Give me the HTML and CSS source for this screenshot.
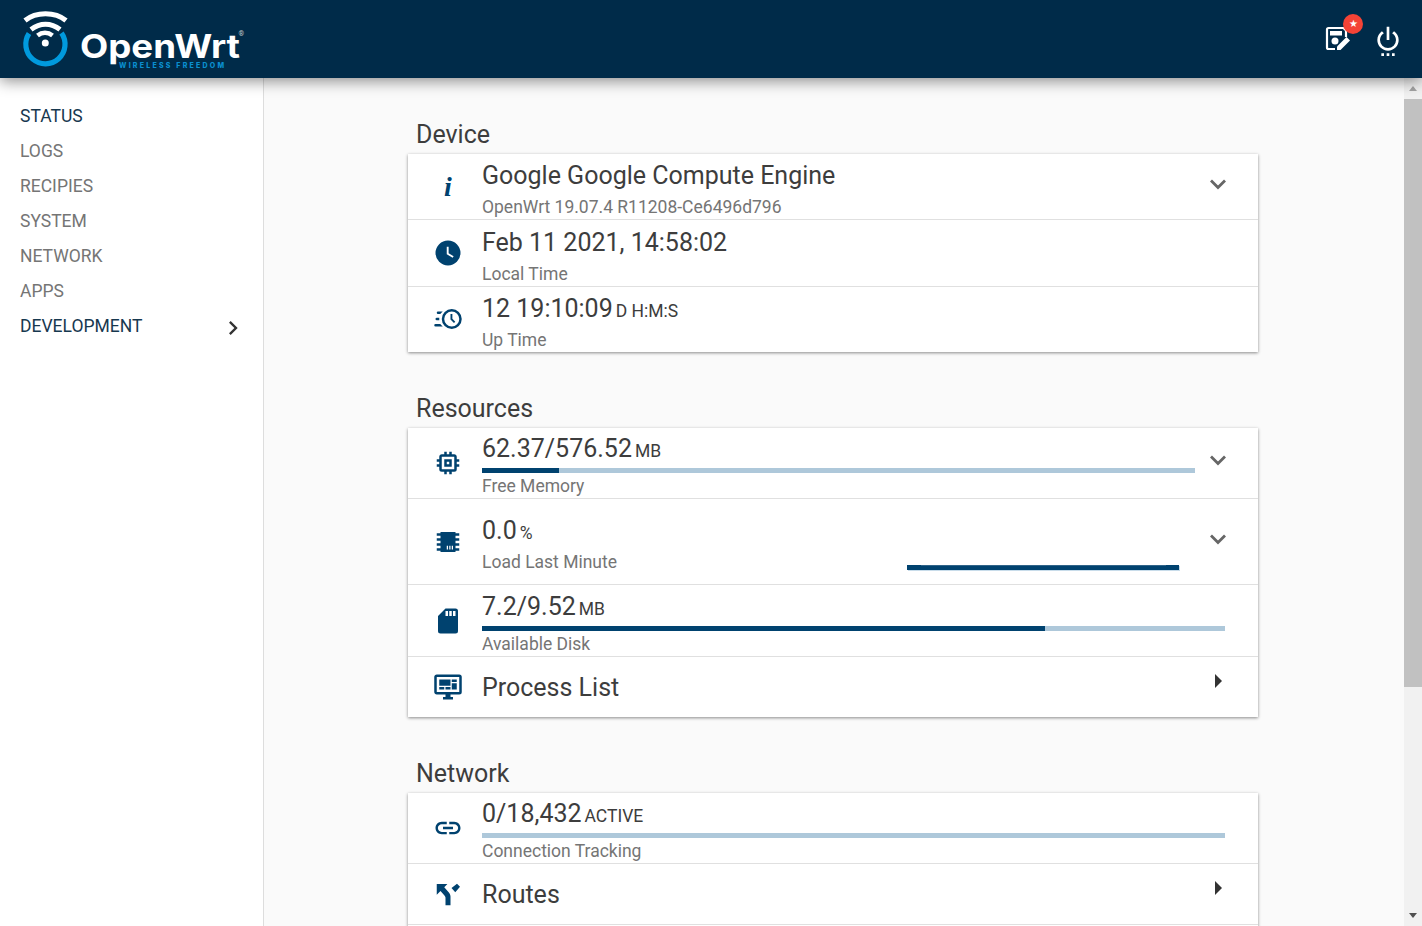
FILE: index.html
```html
<!DOCTYPE html>
<html lang="en">
<head>
<meta charset="utf-8">
<title>OpenWrt</title>
<link rel="stylesheet" href="styles.css">
</head>
<body>
<header class="topbar">
  <svg class="logo" width="250" height="78" viewBox="0 0 250 78">
    <path class="logo-ring" d="M29 33.5A19.6 19.6 0 1 0 61.5 33"/>
    <path class="logo-wave" d="M25 20.5C36 11.500 55 11.500 66 20.5"/>
    <path class="logo-wave" d="M31 29.500C40 22.500 51 22.500 60 29.500"/>
    <path class="logo-wave logo-wave-small" d="M37.5 35.5C42 32 48 32 52.500 35.500"/>
    <circle class="logo-dot" cx="45.300" cy="43" r="3.500"/>
    <text class="logo-name" x="80" y="58" textLength="160" lengthAdjust="spacingAndGlyphs">OpenWrt</text>
    <text class="logo-reg" x="238.500" y="36">®</text>
    <text class="logo-tag" x="119" y="68" textLength="105">WIRELESS FREEDOM</text>
  </svg>
  <div class="top-actions">
    <div class="top-edit">
      <svg width="28" height="28" viewBox="0 0 28 28"><path class="edit-frame" d="M22 12V5.500L19.500 3H4.500Q3 3 3 4.500V22.500Q3 24 4.500 24H11"/><rect class="edit-fill" x="6" y="6" width="12" height="4.500"/><circle class="edit-fill" cx="11" cy="16" r="3.500"/><path class="edit-fill" d="M13 25V21.500L22.500 12L26 15.500L16.500 25Z"/></svg>
      <span class="badge">★</span>
    </div>
    <svg class="power" width="32" height="32" viewBox="0 0 24 24"><path d="M15,24H17V22H15M16.56,5.44L15.11,6.89C16.84,7.94 18,9.83 18,12A6,6 0 0,1 12,18A6,6 0 0,1 6,12C6,9.83 7.16,7.94 8.88,6.88L7.44,5.44C5.36,6.88 4,9.28 4,12A8,8 0 0,0 12,20A8,8 0 0,0 20,12C20,9.28 18.64,6.88 16.56,5.44M13,2H11V12H13M11,24H13V22H11M7,24H9V22H7V24Z"/></svg>
  </div>
</header>
<div class="layout">
  <nav class="sidebar">
    <a class="nav-item nav-active">Status</a>
    <a class="nav-item">Logs</a>
    <a class="nav-item">Recipies</a>
    <a class="nav-item">System</a>
    <a class="nav-item">Network</a>
    <a class="nav-item">Apps</a>
    <a class="nav-item nav-active nav-parent">Development
      <svg class="nav-arrow" width="28" height="28" viewBox="0 0 24 24"><path d="M8.590,16.580L13.170,12L8.590,7.410L10,6L16,12L10,18Z"/></svg>
    </a>
  </nav>
  <main class="content">
    <section class="section">
      <h2 class="section-title">Device</h2>
      <div class="card">
        <div class="row row-info">
          <div class="row-icon"><span class="info-i">i</span></div>
          <div class="row-body"><div class="title">Google Google Compute Engine</div><div class="sub sub-wide">OpenWrt 19.07.4 R11208-Ce6496d796</div></div>
          <svg class="chev" width="46" height="28" viewBox="0 0 46 28"><path d="M16 10.500L23 17.500L30 10.500" /></svg>
        </div>
        <div class="row row-time">
          <div class="row-icon"><svg width="30" height="30" viewBox="0 0 24 24"><path d="M12 2A10 10 0 1 0 12 22A10 10 0 1 0 12 2ZM11 7H12.500V12.200L16.500 14.600L15.700 15.800L11 13Z"/></svg></div>
          <div class="row-body"><div class="title">Feb 11 2021, 14:58:02</div><div class="sub sub-wide">Local Time</div></div>
        </div>
        <div class="row row-up">
          <div class="row-icon"><svg width="30" height="30" viewBox="0 0 24 24"><path d="M15,4A8,8 0 0,1 23,12A8,8 0 0,1 15,20A8,8 0 0,1 7,12A8,8 0 0,1 15,4M15,6A6,6 0 0,0 9,12A6,6 0 0,0 15,18A6,6 0 0,0 21,12A6,6 0 0,0 15,6M14,8H15.5V11.78L17.83,14.11L16.77,15.17L14,12.4V8M2,18A1,1 0 0,1 1,17A1,1 0 0,1 2,16H5.83C6.42,16.72 7.07,17.38 7.8,18H2M3,13A1,1 0 0,1 2,12A1,1 0 0,1 3,11H5.05L5,12L5.05,13H3M4,8A1,1 0 0,1 3,7A1,1 0 0,1 4,6H7.8C7.07,6.62 6.42,7.28 5.83,8H4Z"/></svg></div>
          <div class="row-body"><div class="title">12 19:10:09<span class="unit">d h:m:s</span></div><div class="sub sub-wide">Up Time</div></div>
        </div>
      </div>
    </section>
    <section class="section">
      <h2 class="section-title">Resources</h2>
      <div class="card">
        <div class="row row-bar">
          <div class="row-icon"><svg class="evenodd" width="30" height="30" viewBox="0 0 24 24"><path d="M17,17H7V7H17M21,11V9H19V7C19,5.89 18.1,5 17,5H15V3H13V5H11V3H9V5H7C5.89,5 5,5.89 5,7V9H3V11H5V13H3V15H5V17A2,2 0 0,0 7,19H9V21H11V19H13V21H15V19H17A2,2 0 0,0 19,17V15H21V13H19V11M13,13H11V11H13M15,9H9V15H15V9Z"/></svg></div>
          <div class="row-body"><div class="title">62.37/576.52<span class="unit">MB</span></div><div class="bar"><div class="bar-fill" style="width:10.8%"></div></div><div class="sub">Free Memory</div></div>
          <svg class="chev" width="46" height="28" viewBox="0 0 46 28"><path d="M16 10.500L23 17.500L30 10.500" /></svg>
        </div>
        <div class="row row-load">
          <div class="row-icon"><svg width="30" height="30" viewBox="0 0 24 24"><path d="M6,4H18V5H21V7H18V9H21V11H18V13H21V15H18V17H21V19H18V20H6V19H3V17H6V15H3V13H6V11H3V9H6V7H3V5H6V4M11,15V18H12V15H11M13,15V18H14V15H13M15,15V18H16V15H15Z"/></svg></div>
          <div class="row-body row-body-split">
            <div><div class="title">0.0<span class="unit">%</span></div><div class="sub sub-wide">Load Last Minute</div></div>
            <div class="spark"></div>
          </div>
          <svg class="chev" width="46" height="28" viewBox="0 0 46 28"><path d="M16 10.500L23 17.500L30 10.500" /></svg>
        </div>
        <div class="row row-disk">
          <div class="row-icon"><svg width="30" height="30" viewBox="0 0 24 24"><path d="M18,8H16V4H18M15,8H13V4H15M12,8H10V4H12M18,2H10L4,8V20A2,2 0 0,0 6,22H18A2,2 0 0,0 20,20V4A2,2 0 0,0 18,2Z"/></svg></div>
          <div class="row-body"><div class="title">7.2/9.52<span class="unit">MB</span></div><div class="bar"><div class="bar-fill" style="width:75.8%"></div></div><div class="sub">Available Disk</div></div>
        </div>
        <div class="row row-link">
          <div class="row-icon"><svg width="30" height="30" viewBox="0 0 24 24"><path d="M21,16V4H3V16H21M21,2A2,2 0 0,1 23,4V16A2,2 0 0,1 21,18H14V20H16V22H8V20H10V18H3C1.89,18 1,17.1 1,16V4C1,2.89 1.89,2 3,2H21M5,6H14V11H5V6M15,6H19V8H15V6M19,9V14H15V9H19M5,12H9V14H5V12M10,12H14V14H10V12Z"/></svg></div>
          <div class="row-body"><div class="title">Process List</div></div>
          <svg class="tri" width="46" height="16" viewBox="0 0 46 16"><path d="M20 1L27 8L20 15Z"/></svg>
        </div>
      </div>
    </section>
    <section class="section">
      <h2 class="section-title">Network</h2>
      <div class="card">
        <div class="row row-bar">
          <div class="row-icon"><svg width="30" height="30" viewBox="0 0 24 24"><path d="M3.9 12c0-1.71 1.39-3.1 3.1-3.1h4V7H7c-2.76 0-5 2.24-5 5s2.240 5 5 5h4v-1.9H7c-1.71 0-3.1-1.39-3.1-3.1zM8 13h8v-2H8v2zm9-6h-4v1.900h4c1.710 0 3.100 1.390 3.100 3.100s-1.390 3.100-3.100 3.100h-4V17h4c2.760 0 5-2.240 5-5s-2.240-5-5-5z"/></svg></div>
          <div class="row-body"><div class="title">0/18,432<span class="unit">active</span></div><div class="bar"></div><div class="sub">Connection Tracking</div></div>
        </div>
        <div class="row row-link">
          <div class="row-icon"><svg width="30" height="30" viewBox="0 0 24 24"><path d="M3,4V12.500L6,9.500L9,13C10,14 10,15 10,15V21H14V14C14,14 14,13 13.470,12C12.940,11 12,10 12,10L9,6.580L11.500,4H3ZM19.200,3.800L14.800,7.200L17.800,10.600L21.600,6.200Z"/></svg></div>
          <div class="row-body"><div class="title">Routes</div></div>
          <svg class="tri" width="46" height="16" viewBox="0 0 46 16"><path d="M20 1L27 8L20 15Z"/></svg>
        </div>
        <div class="row row-more"></div>
      </div>
    </section>
  </main>
  <div class="scrollbar">
    <div class="scroll-btn"><span class="scroll-up"></span></div>
    <div class="scroll-thumb"></div>
    <div class="scroll-track"></div>
    <div class="scroll-btn"><span class="scroll-down"></span></div>
  </div>
</div>
</body>
</html>
```
FILE: styles.css
```css
* { box-sizing: border-box; }
html, body { height: 100%; }
body {
  margin: 0;
  overflow: hidden;
  display: flex;
  flex-direction: column;
  font-family: Roboto, "Liberation Sans", sans-serif;
  color: #3d3d3d;
  background: #fafafa;
}
.topbar {
  position: relative;
  z-index: 2;
  flex: 0 0 78px;
  display: flex;
  justify-content: space-between;
  align-items: flex-start;
  background: #002b49;
  box-shadow: 0 3px 14px rgba(0, 0, 0, .45);
}
.logo { display: block; }
.logo-ring { fill: none; stroke: #009ade; stroke-width: 5.2; }
.logo-wave { fill: none; stroke: #fff; stroke-width: 5; }
.logo-wave-small { stroke-width: 4.6; }
.logo-dot { fill: #fff; }
.logo-name { font-family: Inter, sans-serif; font-weight: 700; font-size: 32px; fill: #fff; }
.logo-reg { font-family: Roboto, sans-serif; font-size: 7px; fill: #ccc; }
.logo-tag { font-family: Inter, sans-serif; font-weight: 800; font-size: 7px; fill: #0a8fcf; }
.top-actions { display: flex; align-items: flex-start; padding: 10px 18px 0 0; }
.top-edit { position: relative; width: 28px; height: 28px; margin-top: 15px; margin-right: 20px; }
.edit-frame { fill: none; stroke: #fff; stroke-width: 2.200; }
.edit-fill { fill: #fff; }
.badge {
  position: absolute;
  left: 19px;
  top: -11px;
  width: 20px;
  height: 20px;
  border-radius: 50%;
  background: #f44336;
  color: #fff;
  font-size: 10px;
  line-height: 20px;
  text-align: center;
}
.power { margin-top: 14px; fill: #fff; }
.layout { flex: 1; min-height: 0; display: flex; }
.sidebar {
  flex: 0 0 264px;
  padding-top: 20px;
  background: #fff;
  border-right: 1px solid #ddd;
}
.nav-item {
  display: flex;
  align-items: center;
  justify-content: space-between;
  height: 35px;
  padding: 0 16px 0 20px;
  font-size: 17.500px;
  text-transform: uppercase;
  color: #757575;
}
.nav-active { color: #17384f; }
.nav-arrow { fill: #333; margin-top: 4px; }
.content {
  flex: 1;
  min-width: 0;
  overflow: hidden;
  padding: 40px 146px 0 144px;
}
.section { margin-bottom: 40px; }
.section-title {
  margin: 0 0 2px 8px;
  font-size: 25px;
  font-weight: 400;
  line-height: 34px;
}
.card {
  background: #fff;
  box-shadow: 0 1px 3px rgba(0, 0, 0, .45);
}
.row {
  display: flex;
  align-items: stretch;
  padding-right: 33px;
  border-bottom: 1px solid #e0e0e0;
}
.row:last-child { border-bottom: 0; }
.row-info { height: 66px; }
.row-time { height: 67px; }
.row-up { height: 65px; }
.row-bar { height: 71px; }
.row-load { height: 86px; }
.row-disk { height: 72px; }
.row-link { height: 61px; }
.row-link:last-child { height: 60px; }
.row-more { height: 20px; }
.row-icon {
  flex: 0 0 74px;
  display: flex;
  align-items: center;
  justify-content: center;
  padding-left: 6px;
  color: #00426f;
}
.row-up .row-icon { padding-bottom: 1px; }
.row-icon svg { fill: #00426f; }
.evenodd { fill-rule: evenodd; }
.info-i {
  font-family: "Liberation Serif", serif;
  font-style: italic;
  font-weight: 700;
  font-size: 28px;
  line-height: 30px;
}
.row-body { flex: 1; min-width: 0; padding-top: 5px; }
.row-time .row-body { padding-top: 6px; }
.row-link .row-body { padding-top: 14px; }
.row-bar .row-body { padding-top: 4px; }
.row-disk .row-body { padding-top: 5px; }
.row-load .row-body { padding-top: 15px; }
.row-body-split { display: flex; justify-content: space-between; align-items: flex-start; }
.title { font-size: 25px; line-height: 34px; }
.unit {
  margin-left: 3px;
  font-size: 17.500px;
  line-height: 1;
  text-transform: uppercase;
}
.sub { font-size: 17.500px; line-height: 26px; color: #757575; }
.sub-wide { line-height: 28px; }
.bar { height: 5px; margin-top: 2px; background: #aec8da; }
.bar-fill { height: 100%; background: #00426f; }
.spark {
  flex: 0 0 272px;
  height: 5px;
  margin-top: 51px;
  margin-right: 16px;
  background: linear-gradient(#2f6388, #2f6388) 14px 0 / 245px 1px no-repeat, #00426f;
  box-shadow: 1px 1px 0 #c8dcea;
}
.chev { flex: none; align-self: center; margin: 0 -16px 6px 0; fill: none; stroke: #666; stroke-width: 2.800; }
.tri { flex: none; align-self: center; margin: 0 -16px 12px 0; fill: #333; }
.scrollbar { flex: 0 0 18px; display: flex; flex-direction: column; background: #f1f1f1; }
.scroll-btn { flex: 0 0 21px; display: flex; align-items: center; justify-content: center; }
.scroll-up, .scroll-down { width: 0; height: 0; border-left: 4.500px solid transparent; border-right: 4.500px solid transparent; }
.scroll-up { border-bottom: 5px solid #a3a3a3; }
.scroll-down { border-top: 5px solid #505050; }
.scroll-thumb { flex: 0 0 588px; background: #c1c1c1; }
.scroll-track { flex: 1; }
```
